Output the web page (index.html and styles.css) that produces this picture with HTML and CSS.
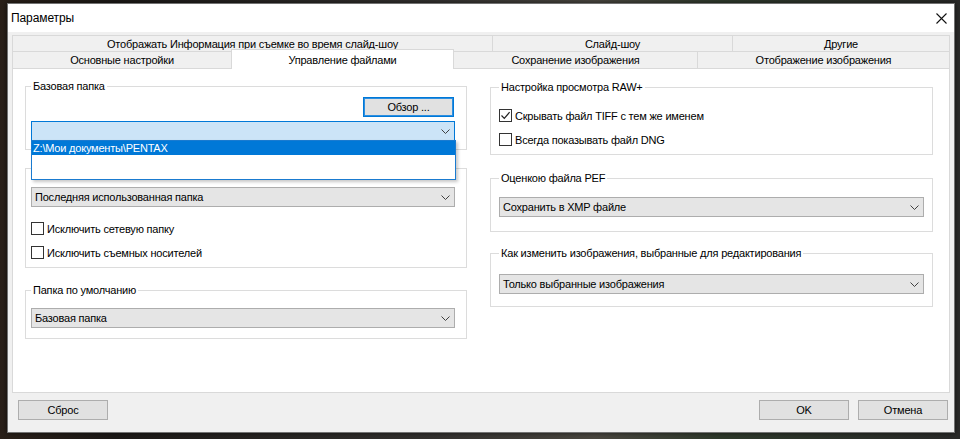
FILE: index.html
```html
<!DOCTYPE html>
<html lang="ru">
<head>
<meta charset="utf-8">
<title>Параметры</title>
<link rel="stylesheet" href="styles.css">
</head>
<body>
<div class="desk">
  <div class="window">
    <div class="titlebar">
      <span class="title">Параметры</span>
      <svg class="close" width="11" height="11" viewBox="0 0 11 11"><path d="M0.5 0.5 L10.5 10.5 M10.5 0.5 L0.5 10.5" stroke="#111" stroke-width="1.1" fill="none"/></svg>
    </div>
    <div class="body">
      <div class="tabs">
        <div class="tabrow back">
          <div class="tab t-info">Отображать Информация при съемке во время слайд-шоу</div>
          <div class="tab t-slide">Слайд-шоу</div>
          <div class="tab t-other">Другие</div>
        </div>
        <div class="tabrow front">
          <div class="tab t-basic">Основные настройки</div>
          <div class="tab t-files sel">Управление файлами</div>
          <div class="tab t-save">Сохранение изображения</div>
          <div class="tab t-view">Отображение изображения</div>
        </div>
      </div>
      <div class="panel">
        <div class="col left">
          <fieldset class="grp g1">
            <legend>Базовая папка</legend>
            <div class="btnrow"><div class="btn default browse">Обзор ...</div></div>
            <div class="combo open">
              <span class="val"></span>
              <svg class="chev" width="9" height="5" viewBox="0 0 9 5"><path d="M0.5 0.5 L4.5 4.5 L8.5 0.5" stroke="#404040" fill="none"/></svg>
              <div class="droplist">
                <div class="item sel">Z:\Мои документы\PENTAX</div>
              </div>
            </div>
          </fieldset>
          <fieldset class="grp g2">
            <legend>Папка при запуске</legend>
            <div class="combo">
              <span class="val">Последняя использованная папка</span>
              <svg class="chev" width="9" height="5" viewBox="0 0 9 5"><path d="M0.5 0.5 L4.5 4.5 L8.5 0.5" stroke="#404040" fill="none"/></svg>
            </div>
            <div class="check c-first"><span class="cb"></span><span>Исключить сетевую папку</span></div>
            <div class="check c-next"><span class="cb"></span><span>Исключить съемных носителей</span></div>
          </fieldset>
          <fieldset class="grp g3">
            <legend>Папка по умолчанию</legend>
            <div class="combo">
              <span class="val">Базовая папка</span>
              <svg class="chev" width="9" height="5" viewBox="0 0 9 5"><path d="M0.5 0.5 L4.5 4.5 L8.5 0.5" stroke="#404040" fill="none"/></svg>
            </div>
          </fieldset>
        </div>
        <div class="col right">
          <fieldset class="grp r1">
            <legend>Настройка просмотра RAW+</legend>
            <div class="check c-first"><span class="cb checked"><svg width="11" height="11" viewBox="0 0 11 11"><path d="M1.5 5.5 L4.3 8.3 L9.6 2.2" stroke="#222" stroke-width="1.2" fill="none"/></svg></span><span>Скрывать файл TIFF с тем же именем</span></div>
            <div class="check c-next"><span class="cb"></span><span>Всегда показывать файл DNG</span></div>
          </fieldset>
          <fieldset class="grp r2">
            <legend>Оценкою файла PEF</legend>
            <div class="combo">
              <span class="val">Сохранить в XMP файле</span>
              <svg class="chev" width="9" height="5" viewBox="0 0 9 5"><path d="M0.5 0.5 L4.5 4.5 L8.5 0.5" stroke="#404040" fill="none"/></svg>
            </div>
          </fieldset>
          <fieldset class="grp r3">
            <legend>Как изменить изображения, выбранные для редактирования</legend>
            <div class="combo">
              <span class="val">Только выбранные изображения</span>
              <svg class="chev" width="9" height="5" viewBox="0 0 9 5"><path d="M0.5 0.5 L4.5 4.5 L8.5 0.5" stroke="#404040" fill="none"/></svg>
            </div>
          </fieldset>
        </div>
      </div>
      <div class="footer">
        <div class="btn">Сброс</div>
        <div class="spacer"></div>
        <div class="btn">OK</div>
        <div class="btn">Отмена</div>
      </div>
    </div>
  </div>
</div>
</body>
</html>
```
FILE: styles.css
```css
html, body {
  margin: 0;
}
body {
  width: 960px;
  height: 439px;
  overflow: hidden;
  background: linear-gradient(90deg, #2a2019 0, #1c1917 12%, #33312f 45%, #4a4740 62%, #2f3a2c 75%, #2a2a29 100%);
  font: 11px/14px "Liberation Sans", Arial, sans-serif;
  letter-spacing: -0.2px;
  color: #000;
}
.desk {
  padding: 3px 0 0 7px;
}
.window {
  width: 948px;
  height: 430px;
  box-sizing: border-box;
  border: 1px solid #727272;
  background: #f0f0f0;
  display: flex;
  flex-direction: column;
  box-shadow: 0 0 5px rgba(0, 0, 0, 0.6);
}
.titlebar {
  height: 28px;
  flex: none;
  background: #fff;
  display: flex;
  align-items: center;
  justify-content: space-between;
  padding: 0 7px 0 3px;
}
.title {
  font-size: 12px;
  letter-spacing: -0.1px;
}
.close {
  display: block;
}
.body {
  flex: 1;
  display: flex;
  flex-direction: column;
  padding: 3px 4px 0;
}
.tabs {
  display: flex;
  flex-direction: column;
}
.tabrow {
  display: flex;
}
.tabrow.back {
  height: 16px;
}
.tabrow.front {
  height: 17px;
}
.tab {
  box-sizing: border-box;
  border: 1px solid #d9d9d9;
  border-right: none;
  border-bottom: none;
  background: #f0f0f0;
  display: flex;
  align-items: center;
  justify-content: center;
  white-space: nowrap;
  line-height: 14px;
}
.tab:last-child {
  border-right: 1px solid #d9d9d9;
}
.t-info { width: 480px; }
.t-slide { width: 240px; }
.t-other { width: 218px; }
.t-basic { width: 219px; }
.t-files { width: 223px; }
.t-save { width: 243px; }
.t-view { width: 253px; }
.tab.sel {
  background: #fff;
  height: 20px;
  margin-top: -2px;
  align-self: flex-start;
  border-right: 1px solid #d9d9d9;
  position: relative;
  z-index: 2;
}
.tab.sel + .tab {
  border-left: none;
}
.panel {
  height: 325px;
  box-sizing: border-box;
  border: 1px solid #d9d9d9;
  background: #fff;
  display: flex;
  gap: 23px;
  padding: 10px 0 0 12px;
}
.col {
  display: flex;
  flex-direction: column;
}
.col.left { width: 442px; }
.col.right { width: 443px; padding-top: 1px; }
.grp {
  margin: 0;
  min-width: 0;
  border: 1px solid #dcdcdc;
  box-sizing: border-box;
}
.grp legend {
  padding: 0 2px;
  line-height: 14px;
  white-space: nowrap;
}
.left .grp { padding-left: 5px; padding-right: 11px; }
.right .grp { padding-left: 8px; padding-right: 8px; }
.g1 { padding-top: 4px; padding-bottom: 8px; }
.g2 { margin-top: 11px; padding-top: 12px; padding-bottom: 8px; }
.g3 { margin-top: 15px; padding-top: 11px; padding-bottom: 10px; }
.r1 { padding-top: 15px; padding-bottom: 8px; }
.r2 { margin-top: 16px; padding-top: 12px; padding-bottom: 14px; }
.r3 { margin-top: 14px; padding-top: 14px; padding-bottom: 12px; }
.btnrow {
  display: flex;
  justify-content: flex-end;
}
.btn {
  width: 90px;
  height: 20px;
  box-sizing: border-box;
  border: 1px solid #adadad;
  background: #e1e1e1;
  display: flex;
  align-items: center;
  justify-content: center;
  line-height: 14px;
}
.btn.browse {
  width: 91px;
  margin-right: 1px;
}
.btn.default {
  border-color: #0078d7;
  box-shadow: inset 0 0 0 1px #2d8fe0;
}
.combo {
  position: relative;
  height: 20px;
  box-sizing: border-box;
  border: 1px solid #adadad;
  background: #e5e5e5;
  display: flex;
  align-items: center;
  justify-content: space-between;
  padding: 0 4px 0 3px;
  white-space: nowrap;
}
.g1 .combo { margin-top: 4px; }
.combo.open {
  background: #cce4f7;
  border-color: #0078d7;
}
.chev {
  display: block;
  flex: none;
}
.droplist {
  position: absolute;
  left: -1px;
  top: 18px;
  width: 425px;
  height: 40px;
  box-sizing: border-box;
  border: 1px solid #1a7bd0;
  background: #fff;
  z-index: 10;
  box-shadow: 2px 2px 3px rgba(0, 0, 0, 0.22);
}
.item {
  height: 14px;
  line-height: 14px;
  padding-left: 1px;
}
.item.sel {
  background: #0078d7;
  color: #fff;
}
.check {
  display: flex;
  align-items: center;
  gap: 3px;
  height: 13px;
  white-space: nowrap;
}
.g2 .c-first { margin-top: 15px; }
.c-next { margin-top: 11px; }
.cb {
  width: 13px;
  height: 13px;
  box-sizing: border-box;
  border: 1px solid #333;
  background: #fff;
  flex: none;
  display: flex;
  align-items: center;
  justify-content: center;
}
.cb svg {
  display: block;
}
.footer {
  display: flex;
  gap: 9px;
  padding: 7px 2px 12px 6px;
}
.spacer {
  flex: 1;
}
```
